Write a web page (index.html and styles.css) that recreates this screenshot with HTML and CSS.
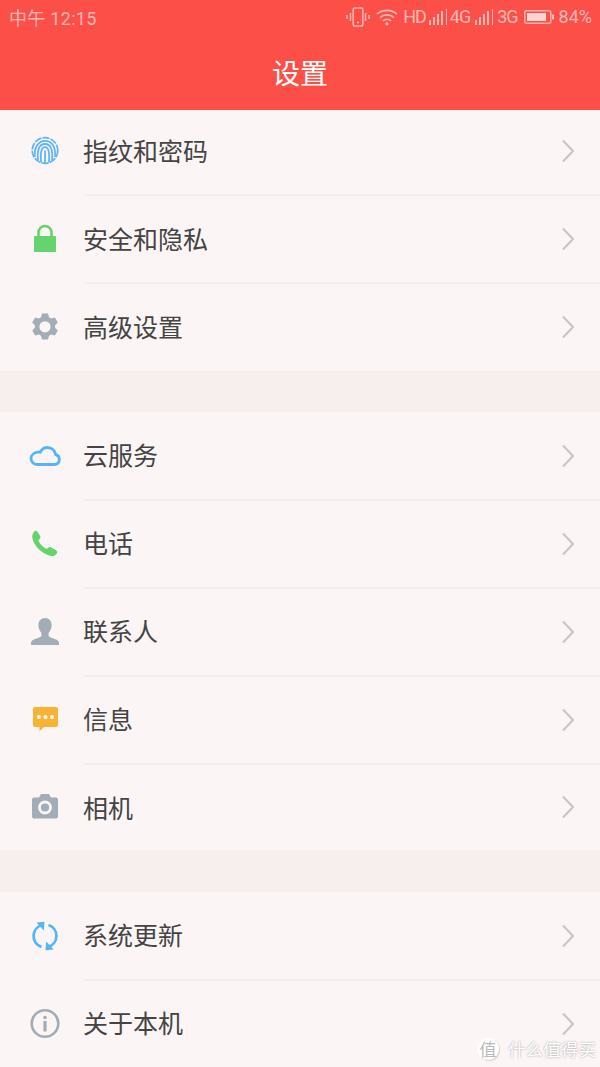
FILE: index.html
```html
<!DOCTYPE html>
<html lang="zh-CN">
<head>
  <meta charset="UTF-8">
  <meta name="viewport" content="width=device-width, initial-scale=1.0">
  <title>设置</title>
  <link rel="stylesheet" href="styles.css">
</head>
<body>
  <header class="header">
    <div class="status-bar">
      <span class="status-time">中午 12:15</span>
      <div class="status-icons">
        <svg class="st-vibrate" width="24" height="20" viewBox="0 0 24 20" fill="none" stroke="currentColor">
          <rect x="7.2" y="1" width="9.6" height="18" rx="1.8" stroke-width="1.5"/>
          <circle cx="12" cy="15.5" r="1" fill="currentColor" stroke="none"/>
          <path d="M4.5 6v8M1 8v4M19.5 6v8M23 8v4" stroke-width="1.5"/>
        </svg>
        <svg class="st-wifi" width="22" height="18" viewBox="0 0 22 18" fill="none" stroke="currentColor" stroke-width="1.7">
          <path d="M1 6.2c5.6-5.2 14.4-5.2 20 0M4 9.6c3.9-3.6 10.1-3.6 14 0M7 12.8c2.3-2 5.7-2 8 0"/>
          <circle cx="11" cy="15.8" r="1.6" fill="currentColor" stroke="none"/>
        </svg>
        <span class="st-text st-hd">HD</span>
        <svg class="st-signal" width="19" height="16" viewBox="0 0 19 16" fill="currentColor">
          <rect x="0" y="11" width="2" height="5"/><rect x="4" y="8" width="2" height="8"/><rect x="8" y="5" width="2" height="11"/><rect x="12" y="2" width="2" height="14"/><rect x="17" y="0" width="1" height="16"/>
        </svg>
        <span class="st-text st-4g">4G</span>
        <svg class="st-signal st-signal-b" width="19" height="16" viewBox="0 0 19 16" fill="currentColor">
          <rect x="0" y="11" width="2" height="5"/><rect x="4" y="8" width="2" height="8"/><rect x="8" y="5" width="2" height="11"/><rect x="12" y="2" width="2" height="14"/><rect x="17" y="0" width="1" height="16"/>
        </svg>
        <span class="st-text st-3g">3G</span>
        <svg class="st-battery" width="30" height="14" viewBox="0 0 30 14">
          <rect x="0.75" y="0.75" width="26" height="12.5" rx="1.5" fill="none" stroke="currentColor" stroke-width="1.5"/>
          <rect x="3" y="3" width="19" height="8" fill="#fff" fill-opacity="0.75"/>
          <rect x="28" y="4.5" width="2" height="5" fill="currentColor"/>
        </svg>
        <span class="st-text st-pct">84%</span>
      </div>
    </div>
    <h1 class="title">设置</h1>
  </header>

  <main>
    <section class="group">
      <div class="row">
        <svg class="icon" width="32" height="32" viewBox="0 0 32 32" fill="none" stroke="#62b5fb" stroke-width="1.8">
          <circle cx="16" cy="15.500" r="12.800" stroke-dasharray="7 1.200"/>
          <path d="M5.800 22C5 13 9 5.800 16 5.800S27 12 26 22"/>
          <path d="M9 25.500C8 15 10 9 16 9s8 6 7 16.500"/>
          <path d="M12 27.500c-.5-9.500 0-15.300 4-15.300s4.500 5.800 4 15.300"/>
          <path d="M16 15.500V28.300"/>
        </svg>
        <span class="label">指纹和密码</span>
        <svg class="chevron" width="14" height="24" viewBox="0 0 14 24" fill="none" stroke="#c6c4c4" stroke-width="2"><path d="M2 1.500 12 12 2 22.500"/></svg>
      </div>
      <div class="row">
        <svg class="icon" width="32" height="32" viewBox="0 0 32 32">
          <path d="M9.500 14V9.500a6.500 6.500 0 0 1 13 0V14" fill="none" stroke="#65d36e" stroke-width="2.600"/>
          <rect x="5" y="13" width="22" height="16" rx="1" fill="#65d36e"/>
        </svg>
        <span class="label">安全和隐私</span>
        <svg class="chevron" width="14" height="24" viewBox="0 0 14 24" fill="none" stroke="#c6c4c4" stroke-width="2"><path d="M2 1.500 12 12 2 22.500"/></svg>
      </div>
      <div class="row">
        <svg class="icon" width="32" height="32" viewBox="0 0 32 32">
          <path fill="#a2adb7" fill-rule="evenodd" d="M13 2.500h6l1 3.700 2.100 1.200 3.700-1 3 5.200-2.700 2.700v2.400l2.700 2.700-3 5.200-3.700-1-2.100 1.200-1 3.700h-6l-1-3.700-2.100-1.200-3.700 1-3-5.200 2.700-2.700v-2.400L3.200 11.600l3-5.200 3.700 1L12 6.200zM16 10.200a5.600 5.600 0 1 0 0 11.200 5.600 5.600 0 0 0 0-11.200z"/>
        </svg>
        <span class="label">高级设置</span>
        <svg class="chevron" width="14" height="24" viewBox="0 0 14 24" fill="none" stroke="#c6c4c4" stroke-width="2"><path d="M2 1.500 12 12 2 22.500"/></svg>
      </div>
    </section>

    <section class="group">
      <div class="row">
        <svg class="icon" width="32" height="32" viewBox="0 0 32 32">
          <path d="M8 24.500h17.500a5 5 0 0 0 1.200-9.800C26 10.800 22.800 7.500 18.500 7.500c-3.300 0-6 2-7.300 4.800C10.500 12 9.800 12 9 12.200 5 12.600 2 15 2 18.500c0 3.500 2.800 6 6 6z" fill="none" stroke="#55b5fb" stroke-width="2.800" stroke-linejoin="round"/>
        </svg>
        <span class="label">云服务</span>
        <svg class="chevron" width="14" height="24" viewBox="0 0 14 24" fill="none" stroke="#c6c4c4" stroke-width="2"><path d="M2 1.500 12 12 2 22.500"/></svg>
      </div>
      <div class="row">
        <svg class="icon" width="32" height="32" viewBox="0 0 32 32">
          <path fill="#65d36e" d="M5.500 3.300c1-.8 2.300-.5 3 .5l2.600 4.200c.6 1 .4 2-.3 2.800l-1.600 1.500c1.800 4 4.800 7 8.600 8.800l1.700-1.500c.8-.7 1.900-.8 2.800-.2l4.800 2.800c1.200.7 1.500 2.100.7 3.200-1.400 1.800-3.300 2.900-5.500 2.600C13 26.500 4.400 17.500 3.300 9.500 3 7 4 4.800 5.500 3.300z"/>
        </svg>
        <span class="label">电话</span>
        <svg class="chevron" width="14" height="24" viewBox="0 0 14 24" fill="none" stroke="#c6c4c4" stroke-width="2"><path d="M2 1.500 12 12 2 22.500"/></svg>
      </div>
      <div class="row">
        <svg class="icon" width="32" height="32" viewBox="0 0 32 32">
          <path fill="#a2adb7" d="M16 2c4 0 6.600 3 6.600 7 0 3-1.200 6-3 7.800v2.400c0 1 .6 1.700 1.600 2.100l5.800 2.200c1.800.7 3 1.900 3 3.500v2H2v-2c0-1.600 1.200-2.800 3-3.500l5.800-2.200c1-.4 1.600-1.100 1.600-2.100v-2.400c-1.800-1.800-3-4.800-3-7.800 0-4 2.600-7 6.600-7z"/>
        </svg>
        <span class="label">联系人</span>
        <svg class="chevron" width="14" height="24" viewBox="0 0 14 24" fill="none" stroke="#c6c4c4" stroke-width="2"><path d="M2 1.500 12 12 2 22.500"/></svg>
      </div>
      <div class="row">
        <svg class="icon" width="32" height="32" viewBox="0 0 32 32">
          <path fill="#f7b334" d="M6 3h21a2 2 0 0 1 2 2v16a2 2 0 0 1-2 2H15l-4.500 4.200V23H6a2 2 0 0 1-2-2V5a2 2 0 0 1 2-2z"/>
          <circle cx="10" cy="13" r="2" fill="#fff"/><circle cx="16.500" cy="13" r="2" fill="#fff"/><circle cx="23" cy="13" r="2" fill="#fff"/>
        </svg>
        <span class="label">信息</span>
        <svg class="chevron" width="14" height="24" viewBox="0 0 14 24" fill="none" stroke="#c6c4c4" stroke-width="2"><path d="M2 1.500 12 12 2 22.500"/></svg>
      </div>
      <div class="row row-short">
        <svg class="icon" width="32" height="32" viewBox="0 0 32 32">
          <path fill="#a2adb7" d="M12 3h8l2 3.500h5a2 2 0 0 1 2 2v17a2 2 0 0 1-2 2H5a2 2 0 0 1-2-2v-17a2 2 0 0 1 2-2h5z"/>
          <circle cx="16" cy="16.500" r="5.500" fill="none" stroke="#fbf5f5" stroke-width="2.800"/>
        </svg>
        <span class="label">相机</span>
        <svg class="chevron" width="14" height="24" viewBox="0 0 14 24" fill="none" stroke="#c6c4c4" stroke-width="2"><path d="M2 1.500 12 12 2 22.500"/></svg>
      </div>
    </section>

    <section class="group">
      <div class="row">
        <svg class="icon" width="32" height="32" viewBox="0 0 32 32">
          <path d="M13 5A11.500 11.500 0 0 0 12.500 27M19.500 5A11.500 11.500 0 0 1 19 27" fill="none" stroke="#55b5fb" stroke-width="2.800"/>
          <path fill="#55b5fb" d="M7.500 2.500 15.500 1.800 14.800 10.500zM24.500 29.500 16.500 30.200 17.200 21.500z"/>
        </svg>
        <span class="label">系统更新</span>
        <svg class="chevron" width="14" height="24" viewBox="0 0 14 24" fill="none" stroke="#c6c4c4" stroke-width="2"><path d="M2 1.500 12 12 2 22.500"/></svg>
      </div>
      <div class="row">
        <svg class="icon" width="32" height="32" viewBox="0 0 32 32">
          <circle cx="16" cy="15.500" r="13.300" fill="none" stroke="#a2adb7" stroke-width="2.600"/>
          <circle cx="16" cy="9.500" r="1.800" fill="#a2adb7"/>
          <rect x="14.400" y="13" width="3.200" height="10.500" fill="#a2adb7"/>
        </svg>
        <span class="label">关于本机</span>
        <svg class="chevron" width="14" height="24" viewBox="0 0 14 24" fill="none" stroke="#c6c4c4" stroke-width="2"><path d="M2 1.500 12 12 2 22.500"/></svg>
      </div>
    </section>
  </main>

  <div class="watermark">
    <span class="wm-badge">值</span>
    <span class="wm-text">什么值得买</span>
  </div>
</body>
</html>
```

FILE: styles.css
```css
html, body {
  margin: 0;
  padding: 0;
}
body {
  position: relative;
  width: 600px;
  height: 1067px;
  overflow: hidden;
  background: #f7eeee;
  font-family: "Noto Sans CJK SC", "Noto Sans", sans-serif;
  color: #444;
}
.header {
  position: relative;
  z-index: 1;
  height: 110px;
  margin-bottom: -3px;
  background: #fc4f47;
}
.status-bar {
  display: flex;
  align-items: center;
  justify-content: space-between;
  height: 34px;
  padding: 0 8px 2px 9px;
  color: rgba(255, 255, 255, 0.6);
  font-family: Roboto, "Noto Sans CJK SC", sans-serif;
  font-size: 18px;
}
.status-time {
  letter-spacing: 0.3px;
}
.status-icons {
  display: flex;
  align-items: center;
}
.st-text {
  line-height: 20px;
}
.st-hd, .st-4g, .st-3g {
  letter-spacing: -1px;
}
.st-wifi {
  margin-left: 6px;
}
.st-hd {
  margin-left: 5px;
}
.st-signal {
  margin-left: 3px;
}
.st-4g {
  margin-left: 2px;
}
.st-signal-b {
  margin-left: 5px;
}
.st-3g {
  margin-left: 3px;
}
.st-battery {
  margin-left: 6px;
}
.st-pct {
  margin-left: 5px;
}
.title {
  margin: 0;
  height: 74px;
  line-height: 72px;
  text-align: center;
  font-size: 28px;
  font-weight: 400;
  color: #fff;
}
.group {
  margin-bottom: 42px;
  background: #fbf5f5;
}
.group:first-child {
  margin-bottom: 41px;
}
.row {
  display: flex;
  align-items: center;
  height: 88px;
  padding: 0 25px 0 29px;
  box-sizing: border-box;
  position: relative;
}
.row-short {
  height: 86px;
}
.row::after {
  content: "";
  position: absolute;
  left: 84px;
  right: 0;
  bottom: -1px;
  height: 2px;
  background: #f2eeee;
}
.row:last-child::after {
  display: none;
}
.icon {
  flex: none;
  margin-right: 22px;
}
.label {
  flex: 1;
  font-size: 25px;
  line-height: 32px;
  padding-bottom: 2px;
}
.group + .group .label {
  padding-bottom: 4px;
}
.group + .group .row-short .label {
  padding-bottom: 0;
}
.chevron {
  flex: none;
}
.watermark {
  position: absolute;
  left: 477px;
  top: 1038px;
  display: flex;
  align-items: center;
  gap: 9px;
}
.wm-badge {
  width: 22px;
  height: 22px;
  border-radius: 50%;
  background: #fff;
  box-shadow: 1px 1px 1px rgba(0, 0, 0, 0.15);
  color: #bdb9b9;
  font-size: 17px;
  line-height: 22px;
  text-align: center;
}
.wm-text {
  font-size: 17.6px;
  line-height: 22px;
  color: #fff;
  text-shadow: 0 0 2px rgba(0, 0, 0, 0.4);
}
```
